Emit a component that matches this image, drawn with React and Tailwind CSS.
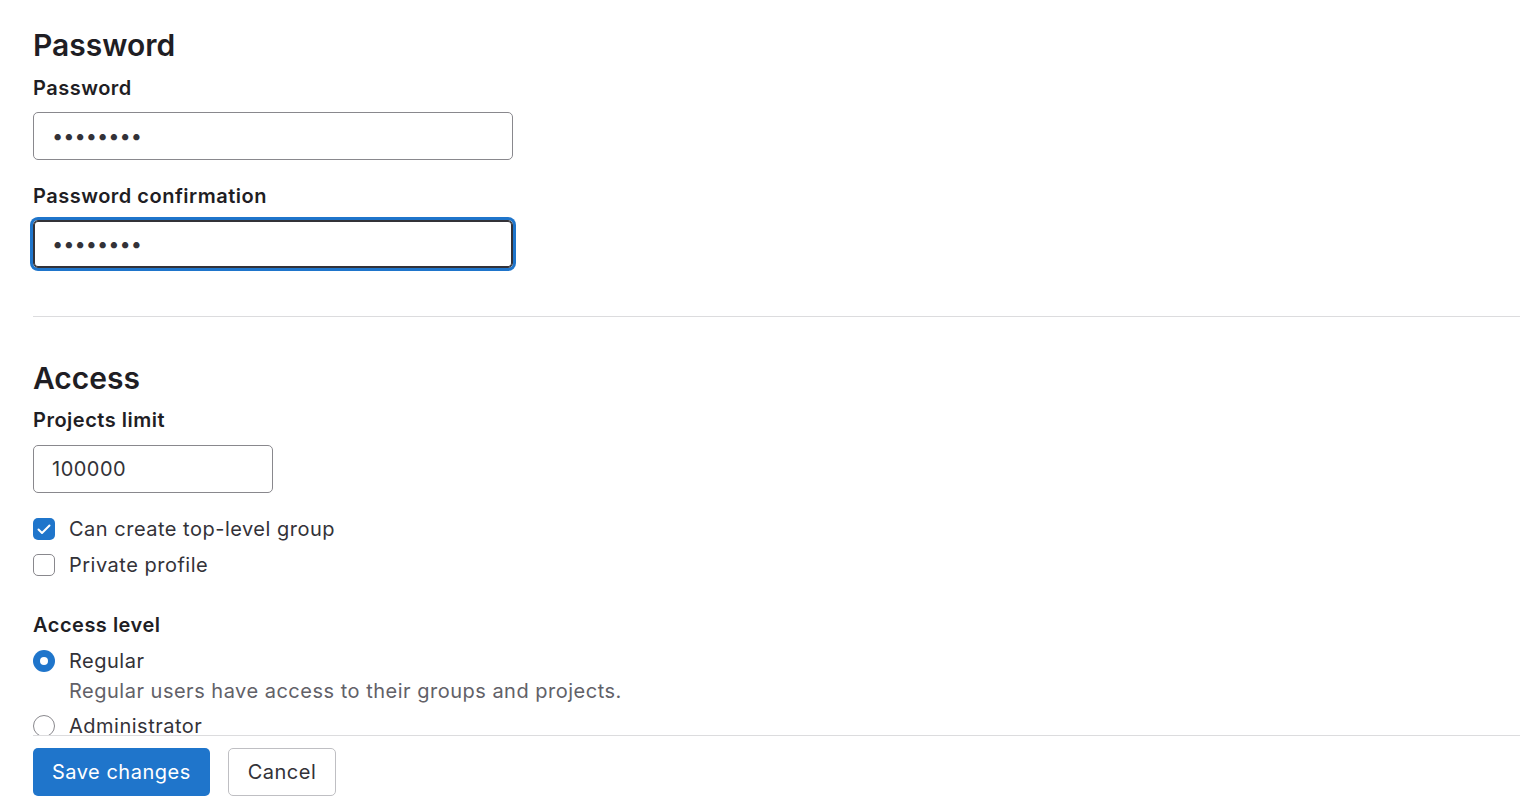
import React from 'react';

const font = { fontFamily: 'Inter, "Noto Sans", sans-serif' };

function Checkbox({ checked, label }) {
  return (
    <label className="flex h-9 items-center gap-[14px] text-[20px] tracking-[0.5px] text-[#333238]">
      <span
        className={
          checked
            ? 'flex h-[22px] w-[22px] items-center justify-center rounded-[5px] bg-[#1f75cb]'
            : 'h-[22px] w-[22px] rounded-[5px] border border-[#89888d] bg-white'
        }
      >
        {checked && (
          <svg width="16" height="16" viewBox="0 0 16 16" fill="none">
            <path d="M2.5 8.5l3.5 3.5L13.5 4.5" stroke="white" strokeWidth="2" strokeLinecap="round" strokeLinejoin="round" />
          </svg>
        )}
      </span>
      {label}
    </label>
  );
}

function Radio({ checked, label }) {
  return (
    <label className="flex h-[30px] items-center gap-[14px] text-[20px] tracking-[0.5px] text-[#333238]">
      {checked ? (
        <span className="flex h-[22px] w-[22px] items-center justify-center rounded-full bg-[#1f75cb]">
          <span className="h-[8px] w-[8px] rounded-full bg-white" />
        </span>
      ) : (
        <span className="h-[22px] w-[22px] rounded-full border border-[#89888d] bg-white" />
      )}
      {label}
    </label>
  );
}

export default function App() {
  return (
    <div className="flex h-[805px] flex-col overflow-hidden bg-white" style={font}>
      <div className="h-[735px] overflow-hidden pl-[33px]">
        {/* Password section */}
        <h2 className="mt-[27px] h-9 text-[30px] font-semibold leading-9 text-[#1f1e24]">Password</h2>
        <div className="mt-[13px] text-[20px] font-semibold leading-6 tracking-[0.5px] text-[#1f1e24]">Password</div>
        <input
          type="password"
          readOnly
          defaultValue="12345678"
          className="mt-[12px] block h-12 w-[480px] rounded-[5px] border border-[#89888d] px-[18px] text-[20px] text-[#333238] outline-none"
        />
        <div className="mt-[24px] text-[20px] font-semibold leading-6 tracking-[0.5px] text-[#1f1e24]">Password confirmation</div>
        <input
          type="password"
          readOnly
          defaultValue="12345678"
          className="mt-[12px] block h-12 w-[480px] rounded-[5px] border border-[#333238] px-[18px] text-[20px] text-[#333238] outline-none ring-[3px] ring-[#1f75cb] shadow-[inset_0_0_0_1px_#333238]"
        />

        <hr className="mt-[48px] border-t border-[#dcdcde]" />

        {/* Access section */}
        <h2 className="mt-[43px] h-9 text-[30px] font-semibold leading-9 text-[#1f1e24]">Access</h2>
        <div className="mt-[12px] text-[20px] font-semibold leading-6 tracking-[0.5px] text-[#1f1e24]">Projects limit</div>
        <input
          type="text"
          readOnly
          defaultValue="100000"
          className="mt-[13px] block h-12 w-[240px] rounded-[5px] border border-[#89888d] px-[18px] text-[20px] tracking-[0.5px] text-[#333238] outline-none"
        />

        <div className="mt-[18px]">
          <Checkbox checked label="Can create top-level group" />
          <Checkbox label="Private profile" />
        </div>

        <div className="mt-[30px] text-[20px] font-semibold leading-6 tracking-[0.5px] text-[#1f1e24]">Access level</div>
        <div className="mt-[9px]">
          <Radio checked label="Regular" />
          <p className="pl-[36px] text-[20px] leading-[30px] tracking-[0.5px] text-[#626168]">
            Regular users have access to their groups and projects.
          </p>
          <div className="mt-[5px]">
            <Radio label="Administrator" />
          </div>
        </div>
      </div>

      {/* Sticky footer */}
      <div className="ml-[33px] flex gap-[18px] border-t border-[#dcdcde] pt-[12px]">
        <button className="h-12 rounded-[5px] bg-[#1f75cb] px-[19px] text-[20px] tracking-[0.5px] text-white">Save changes</button>
        <button className="h-12 rounded-[5px] border border-[#bfbfc3] bg-white px-[19px] text-[20px] tracking-[0.5px] text-[#333238]">
          Cancel
        </button>
      </div>
    </div>
  );
}
